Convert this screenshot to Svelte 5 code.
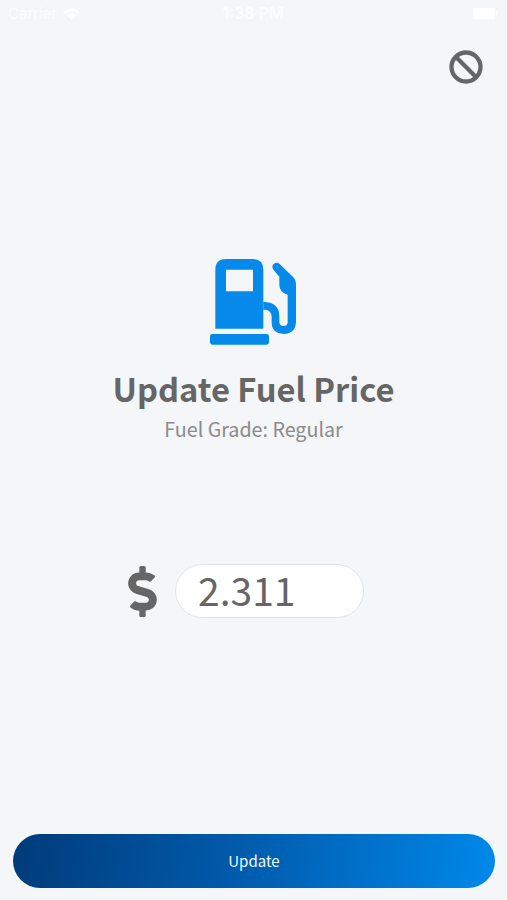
<script lang="ts">
  let price = $state('2.311');

  const carrier = 'Carrier';
  const time = '1:38 PM';
  const grade = 'Regular';
</script>

<main class="screen">
  <header class="status-bar">
    <div class="network">
      <span>{carrier}</span>
      <svg class="wifi" viewBox="0 0 20 14" aria-hidden="true">
        <path d="M1 4.5Q10-3 19 4.5L16.500 7Q10 2 3.500 7Z" />
        <path d="M4.700 8.200Q10 4 15.300 8.200L10 13.500Z" />
      </svg>
    </div>
    <span class="time">{time}</span>
    <svg class="battery" viewBox="0 0 25 11" aria-hidden="true">
      <rect width="22" height="11" rx="2" />
      <rect x="23" y="3" width="2" height="5" rx="1" />
    </svg>
  </header>

  <nav class="toolbar">
    <button class="cancel" aria-label="Cancel">
      <svg viewBox="0 0 34 34" aria-hidden="true">
        <circle cx="17" cy="17" r="14.500" />
        <path d="M6.800 6.800L27.200 27.200" />
      </svg>
    </button>
  </nav>

  <section class="intro">
    <svg class="pump" viewBox="30 26 258 258" aria-hidden="true">
      <path
        fill-rule="evenodd"
        d="M46 235V58Q46 26 78 26H158Q190 26 190 58V235ZM78 58V123H159V58Z"
      />
      <rect x="30" y="251" width="177" height="32" rx="7" />
      <path
        d="M190 155H196Q238 158 238 199V216Q239 227 251 227Q263 227 263 216V133Q238 126 238 103V79L220 58Q214 49 220 42Q229 33 239 41L280 81Q288 89 288 100V214Q287 249 251 251Q215 249 215 216V199Q215 181 196 178H190Z"
      />
    </svg>
    <h1>Update Fuel Price</h1>
    <p>Fuel Grade: {grade}</p>
  </section>

  <div class="price">
    <svg class="dollar" viewBox="0 0 288 512" aria-hidden="true">
      <path
        d="M209.2 233.4l-108-31.6C88.7 198.2 80 186.5 80 173.5c0-16.3 13.2-29.5 29.5-29.5h66.3c12.2 0 24.2 3.7 34.2 10.5 6.1 4.1 14.3 3.1 19.5-2l34.8-34c7.1-6.9 6.1-18.4-1.8-24.5C238 74.8 207.4 64.1 176 64V16c0-8.8-7.2-16-16-16h-32c-8.8 0-16 7.2-16 16v48h-2.5C45.8 64-5.4 118.7.5 183.6c4.2 46.1 39.4 83.6 83.8 96.6l102.5 30c12.5 3.7 21.2 15.3 21.2 28.3 0 16.3-13.2 29.5-29.5 29.5h-66.3C100 368 88 364.3 78 357.5c-6.1-4.1-14.3-3.1-19.5 2l-34.8 34c-7.1 6.9-6.1 18.4 1.8 24.5 24.5 19.2 55.1 29.9 86.500 30v48c0 8.8 7.2 16 16 16h32c8.8 0 16-7.2 16-16v-48.2c46.6-.9 90.3-28.6 105.7-72.7 21.5-61.6-14.6-124.8-72.5-141.7z"
      />
    </svg>
    <input bind:value={price} inputmode="decimal" aria-label="Fuel price" />
  </div>

  <button class="update">Update</button>
</main>

<style>
  :global(body) {
    background: #f4f6f8;
  }

  .screen {
    box-sizing: border-box;
    display: flex;
    flex-direction: column;
    height: 900px;
    padding: 0 12px 12px 13px;
    overflow: hidden;
    color: #666;
    background: #f4f6f8;
    font-family: 'Noto Sans CJK SC', 'Noto Sans', sans-serif;
  }

  .status-bar {
    display: grid;
    grid-template-columns: 1fr auto 1fr;
    align-items: center;
    height: 27px;
    margin: 0 -3px 0 -5px;
    color: #fcfdfd;
    font: 15px/27px 'Inter', sans-serif;
  }

  .network {
    display: flex;
    align-items: center;
    gap: 5px;
  }

  .status-bar svg {
    fill: #fff;
  }

  .wifi {
    width: 19px;
    height: 14px;
  }

  .time {
    font-size: 16px;
    font-weight: 600;
  }

  .battery {
    justify-self: end;
    width: 25px;
    height: 11px;
  }

  .toolbar {
    display: flex;
    justify-content: flex-end;
    padding: 23px 12.5px 0 0;
  }

  button {
    padding: 0;
    border: 0;
    font-family: inherit;
  }

  .cancel {
    width: 34px;
    height: 34px;
    background: none;
  }

  .cancel svg {
    display: block;
    fill: none;
    stroke: #666;
    stroke-width: 4.3;
  }

  .intro {
    display: flex;
    flex-direction: column;
    align-items: center;
    margin: 174.5px 1px 0 0;
  }

  .pump {
    width: 86px;
    height: 86px;
    margin-right: 1px;
    fill: #058aeb;
  }

  h1 {
    margin: 19.5px 0 0;
    font-size: 32.7px;
    font-weight: 700;
    line-height: 48px;
  }

  p {
    margin: 2px 0 0;
    color: #8b8b8b;
    font-size: 19.7px;
    line-height: 30px;
  }

  .price {
    display: flex;
    align-items: center;
    gap: 18px;
    margin: 120px 0 0 115px;
  }

  .dollar {
    width: 29px;
    height: 51px;
    fill: #666;
  }

  input {
    box-sizing: border-box;
    width: 189px;
    height: 54px;
    padding: 0 22px 5px;
    border: 1px solid #e1e3e5;
    border-radius: 27px;
    outline: none;
    color: #666;
    background: #fff;
    font: 39px/47px 'Noto Sans CJK SC', 'Noto Sans', sans-serif;
  }

  .update {
    height: 54px;
    margin-top: auto;
    border-radius: 27px;
    color: #f4f9fd;
    background: linear-gradient(100deg, #003b7a, #005cad 48%, #0088ea);
    font-size: 15px;
    line-height: 54px;
  }
</style>
